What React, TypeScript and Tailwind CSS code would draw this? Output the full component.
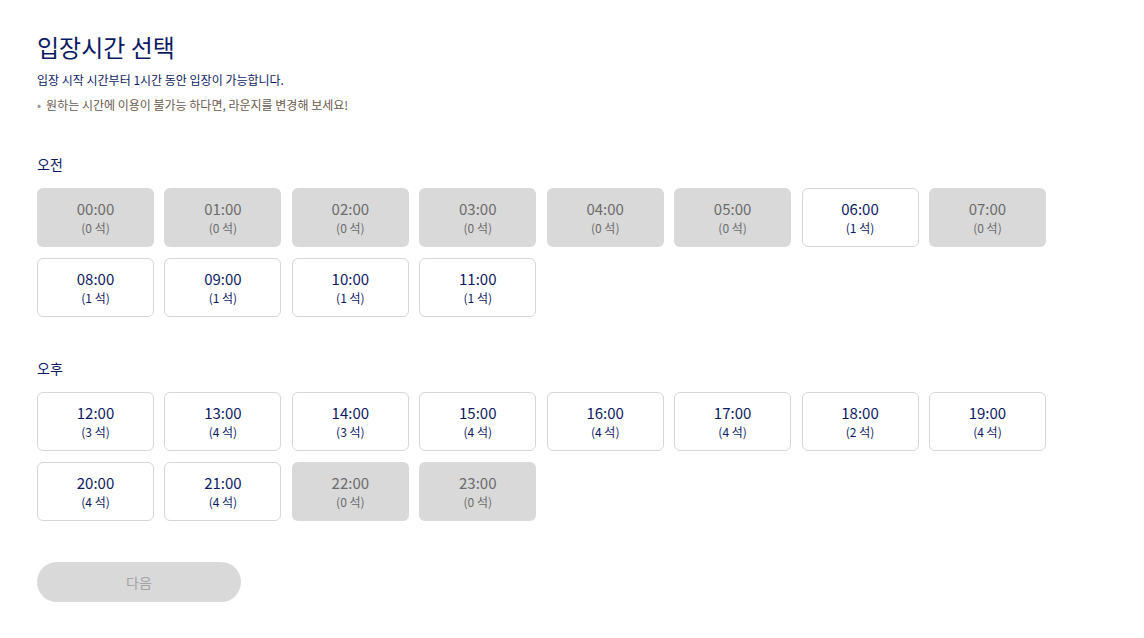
const AM = [0, 0, 0, 0, 0, 0, 1, 0, 1, 1, 1, 1]
const PM = [3, 4, 3, 4, 4, 4, 2, 4, 4, 4, 0, 0]

function Slot({ hour, seats }: { hour: number; seats: number }) {
  const off = seats === 0
  return (
    <button
      type="button"
      disabled={off}
      className={`flex h-[59px] w-[117px] flex-col items-center justify-center rounded-md ${
        off ? 'bg-[#d9d9d9] text-[#6b6b6b]' : 'border border-[#d6d6d6] bg-white text-[#0d1a63]'
      }`}
    >
      <span className="text-[15px] leading-[20px]">{String(hour).padStart(2, '0')}:00</span>
      <span className="text-[12px] leading-[17px]">({seats} 석)</span>
    </button>
  )
}

function Section({ label, start, seats }: { label: string; start: number; seats: number[] }) {
  return (
    <section>
      <h2 className="text-[14px] leading-[20px] text-[#0d1a63]">{label}</h2>
      <div className="mt-[14px] grid w-fit grid-cols-[repeat(8,117px)] gap-x-[10.43px] gap-y-[11px]">
        {seats.map((n, i) => (
          <Slot key={i} hour={start + i} seats={n} />
        ))}
      </div>
    </section>
  )
}

export default function App() {
  return (
    <div
      className="min-h-[638px] bg-white px-[37px] pt-[30px]"
      style={{ fontFamily: '"Noto Sans CJK KR", "Noto Sans", sans-serif' }}
    >
      <h1 className="text-[24px] leading-[34px] text-[#0d1a63]">입장시간 선택</h1>
      <p className="mt-[7px] text-[12px] leading-[18px] text-[#0d1a63]">
        입장 시작 시간부터 1시간 동안 입장이 가능합니다.
      </p>
      <p className="mt-[7px] flex items-center gap-[5px] text-[12px] leading-[18px] text-[#6b5a4e]">
        <span className="text-[#999]">•</span>원하는 시간에 이용이 불가능 하다면, 라운지를 변경해 보세요!
      </p>

      <div className="mt-[40px] flex flex-col gap-[41px]">
        <Section label="오전" start={0} seats={AM} />
        <Section label="오후" start={12} seats={PM} />
      </div>

      <button
        type="button"
        disabled
        className="mt-[41px] h-[40px] w-[204px] rounded-full bg-[#d9d9d9] text-[14px] text-[#a3a3a3]"
      >
        다음
      </button>
    </div>
  )
}
